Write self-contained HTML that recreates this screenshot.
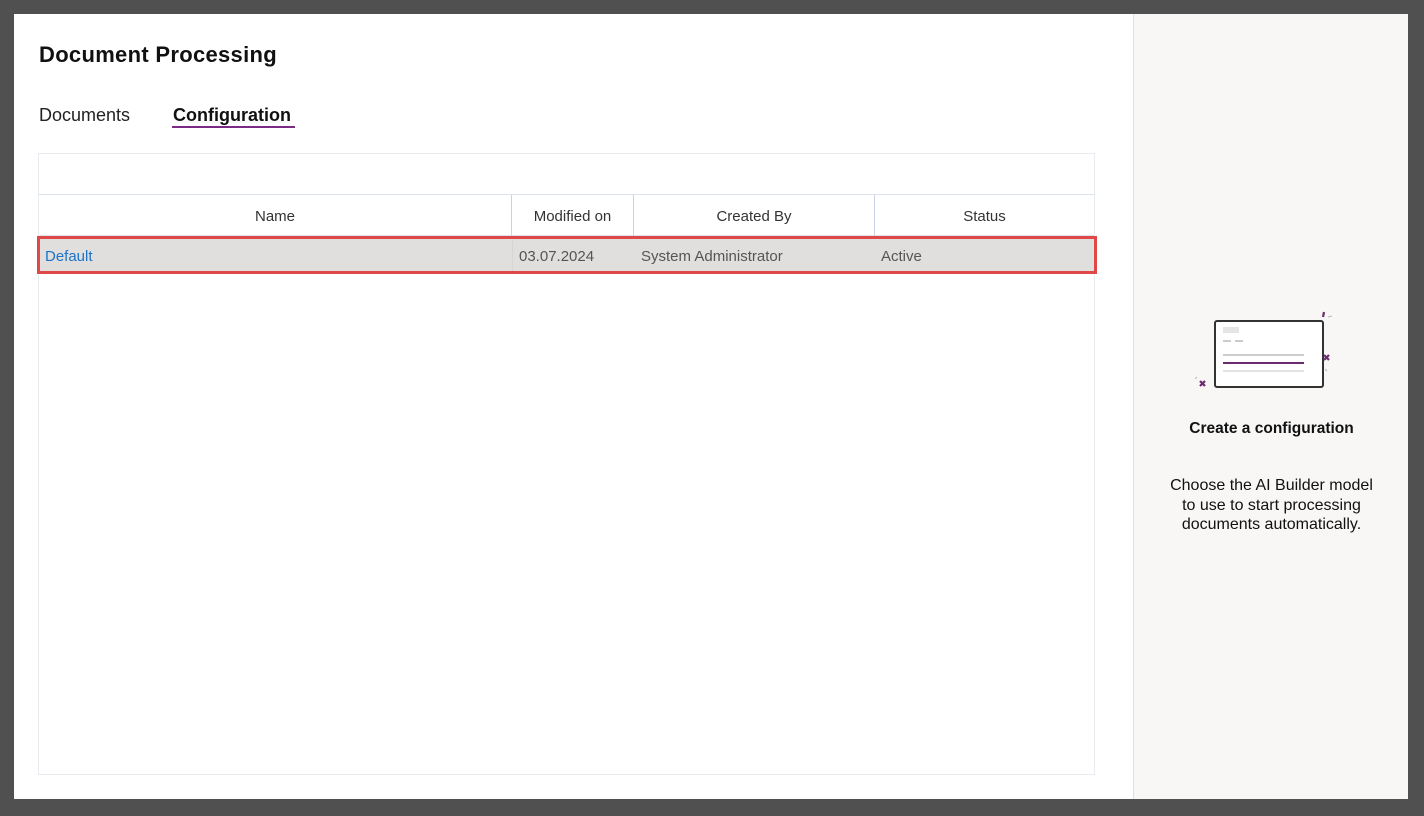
<!DOCTYPE html>
<html><head><style>
*{margin:0;padding:0;box-sizing:border-box}
body{width:1424px;height:816px;background:#505050;position:relative;font-family:"Segoe UI","Liberation Sans",sans-serif;overflow:hidden}
.main{position:absolute;left:14px;top:14px;width:1119px;height:785px;background:#fff}
.side{position:absolute;left:1133px;top:14px;width:275px;height:785px;background:#f8f7f6;border-left:1px solid #e1dfdd}
h1{position:absolute;left:25px;top:28px;font-size:22px;font-weight:600;color:#111;letter-spacing:0.3px}
.tab{position:absolute;top:91px;font-size:18px;color:#222}
.tbl{position:absolute;left:24px;top:139px;width:1057px;height:622px;border:1px solid #e8ebef}
.hdr{position:absolute;left:0;top:40px;width:1055px;height:42px;border-top:1px solid #dde3ec;border-bottom:1px solid #dde3ec}
.hc{position:absolute;top:0;height:41px;line-height:43px;text-align:center;font-size:15px;color:#333;border-right:1px solid #c8d4e6}
.row{position:absolute;left:-2px;top:82px;width:1060px;height:38px;background:#e0dfdd;border:3px solid #e04848}
.c{position:absolute;top:0;line-height:35px;font-size:15px;color:#555}
.side .t{position:absolute;left:0;width:275px;text-align:center;color:#111;font-size:15px}
</style></head><body>
<div class="main">
<h1>Document Processing</h1>
<div class="tab" style="left:25px">Documents</div>
<div class="tab" style="left:159px;font-weight:600;color:#111">Configuration</div>
<div style="position:absolute;left:158px;top:112px;width:123px;height:2px;background:#7b2c82"></div>
<div class="tbl">
<div class="hdr">
<div class="hc" style="left:0;width:473px">Name</div>
<div class="hc" style="left:473px;width:122px">Modified on</div>
<div class="hc" style="left:595px;width:241px">Created By</div>
<div class="hc" style="left:836px;width:219px;border-right:none">Status</div>
</div>
<div class="row">
<div class="c" style="left:5px;color:#1a73c8">Default</div>
<div class="c" style="left:472px;border-left:1px solid #d8d6d4;padding-left:6px;height:32px">03.07.2024</div>
<div class="c" style="left:601px">System Administrator</div>
<div class="c" style="left:841px">Active</div>
</div>
</div>
</div>
<div class="side">
<svg style="position:absolute;left:55px;top:295px" width="150" height="85" viewBox="0 0 150 85">
<rect x="26" y="12" width="108" height="66" rx="2" fill="#fff" stroke="#333" stroke-width="2"/>
<rect x="34" y="18" width="16" height="6" fill="#e5e5e5"/>
<line x1="34" y1="32" x2="42" y2="32" stroke="#bbb" stroke-width="1.5"/>
<line x1="46" y1="32" x2="54" y2="32" stroke="#bbb" stroke-width="1.5"/>
<line x1="34" y1="46" x2="115" y2="46" stroke="#ccc" stroke-width="2"/>
<line x1="34" y1="54" x2="115" y2="54" stroke="#6b2b6e" stroke-width="2"/>
<line x1="34" y1="62" x2="115" y2="62" stroke="#e3e3e3" stroke-width="2"/>
<path d="M135 3l-1 5M135 46l5 5M140 46l-5 5M11 72l5 5M16 72l-5 5" stroke="#6b2b6e" stroke-width="2.2"/>
<path d="M139 8l4-1M136 60l2 2M6 70l2-2" stroke="#bbb" stroke-width="1"/>
</svg>
<div class="t" style="top:406px;font-weight:600;font-size:15.5px">Create a configuration</div>
<div class="t" style="top:462px;line-height:19.5px;font-size:16px">Choose the AI Builder model<br>to use to start processing<br>documents automatically.</div>
</div>
</body></html>
